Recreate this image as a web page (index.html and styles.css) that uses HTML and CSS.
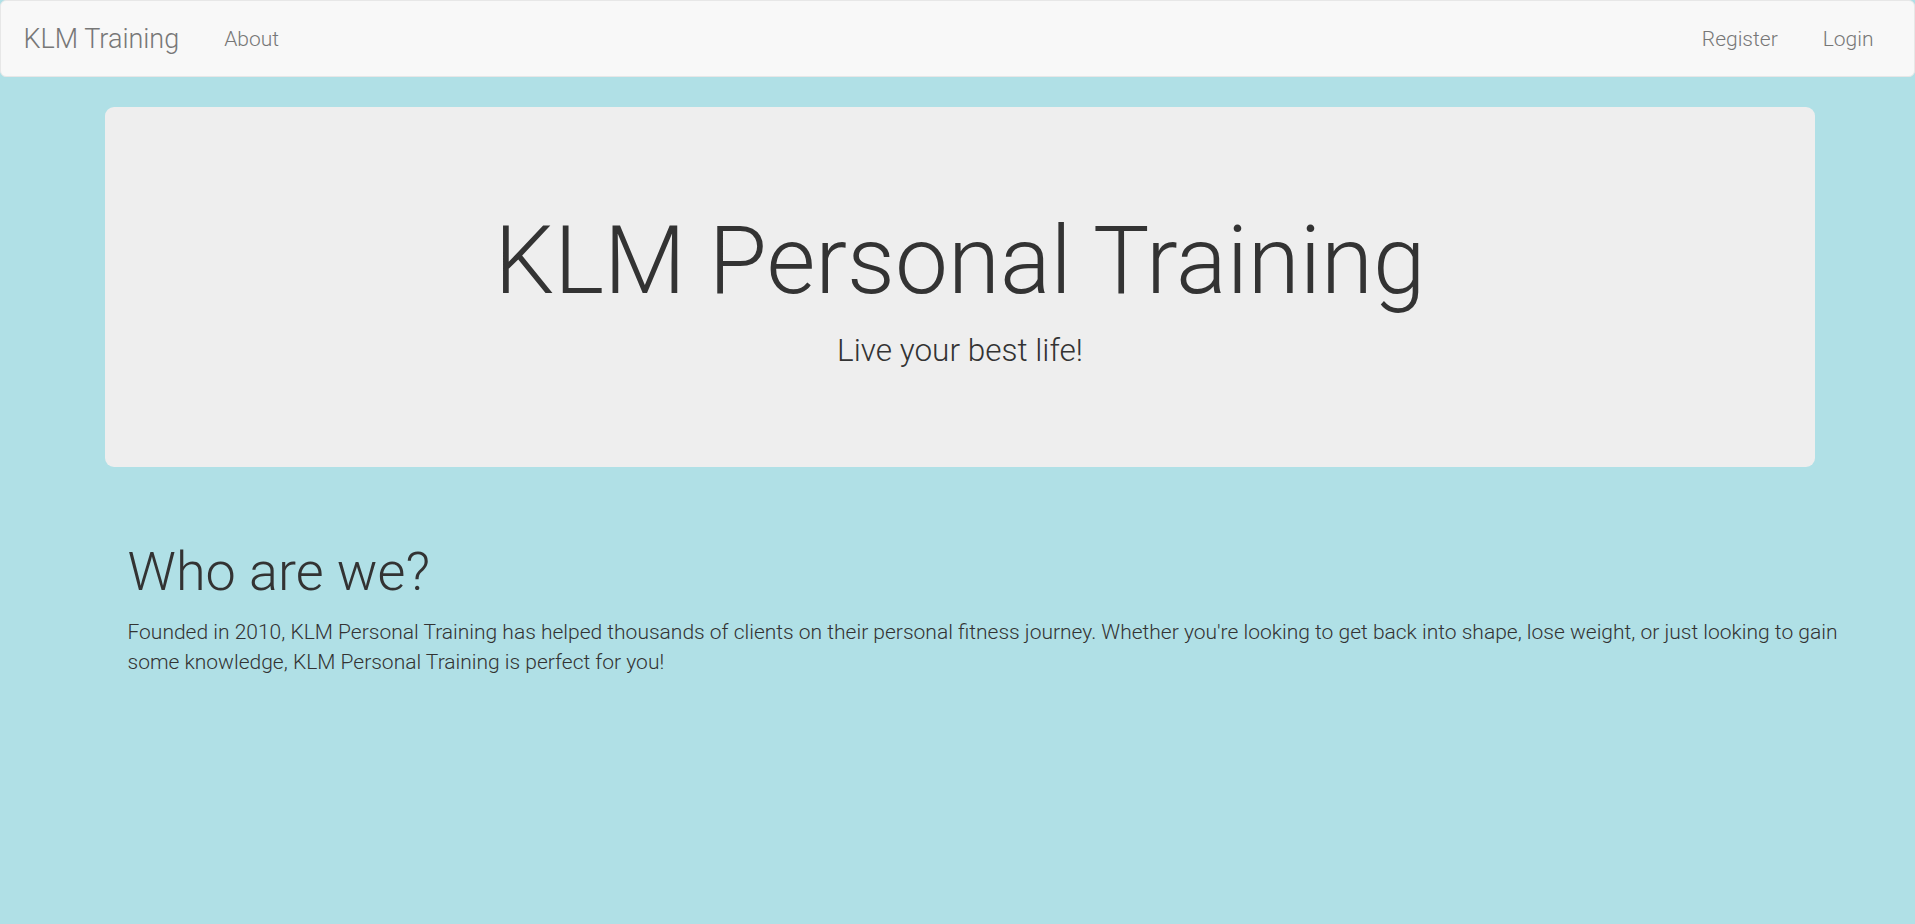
FILE: index.html
```html
<!DOCTYPE html>
<html lang="en">
<head>
<meta charset="utf-8">
<title>KLM Training</title>
<link rel="stylesheet" href="styles.css">
</head>
<body>
  <nav class="navbar">
    <div class="nav-left">
      <a class="brand" href="#">KLM Training</a>
      <a class="nav-link" href="#">About</a>
    </div>
    <div class="nav-right">
      <a class="nav-link" href="#">Register</a>
      <a class="nav-link" href="#">Login</a>
    </div>
  </nav>

  <header class="jumbotron">
    <h1 class="jumbo-title">KLM Personal Training</h1>
    <p class="jumbo-sub">Live your best life!</p>
  </header>

  <section class="about">
    <h1 class="about-title">Who are we?</h1>
    <p class="about-text">Founded in 2010, KLM Personal Training has helped thousands of clients on their personal fitness journey. Whether you're looking to get back into shape, lose weight, or just looking to gain some knowledge, KLM Personal Training is perfect for you!</p>
  </section>
</body>
</html>
```

FILE: styles.css
```css
* {
  box-sizing: border-box;
}

html, body {
  margin: 0;
  padding: 0;
}

body {
  background: #b0e0e6;
  font-family: Roboto, "Liberation Sans", sans-serif;
  font-weight: 300;
  color: #333;
  min-height: 924px;
}

a {
  text-decoration: none;
}

.navbar {
  display: flex;
  justify-content: space-between;
  height: 77px;
  background: #f8f8f8;
  border: 1px solid #e7e7e7;
  border-radius: 6px;
  padding: 0 22.5px;
  margin-bottom: 30px;
}

.nav-left,
.nav-right {
  display: flex;
}

.nav-right {
  margin-right: -4.5px;
}

.brand {
  display: block;
  margin-left: -22.5px;
  padding: 22.5px;
  font-size: 27px;
  line-height: 30px;
  color: #777;
}

.nav-link {
  display: block;
  padding: 22.5px;
  font-size: 21px;
  line-height: 30px;
  color: #777;
}

.jumbotron {
  margin: 0 100px 45px 105px;
  padding: 72px 90px;
  background: #eee;
  border-radius: 9px;
  text-align: center;
}

.jumbo-title {
  margin: 30px 0 15px;
  font-size: 94.5px;
  line-height: 1.1;
  font-weight: 300;
  color: #333;
}

.jumbo-sub {
  margin: 0 0 22.5px;
  font-size: 31.5px;
  line-height: 45px;
  font-weight: 300;
}

.about {
  display: flow-root;
  padding: 0 53px 0 127.5px;
}

.about-title {
  margin: 30px 0 15px;
  font-size: 54px;
  line-height: 1.1;
  font-weight: 300;
  color: #333;
}

.about-text {
  margin: 0;
  font-size: 21px;
  line-height: 30px;
}
```
